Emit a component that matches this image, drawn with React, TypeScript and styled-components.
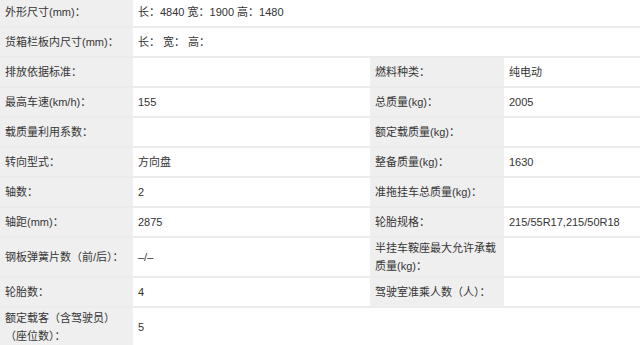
import React from "react";
import styled, { createGlobalStyle } from "styled-components";

const Global = createGlobalStyle`
  html, body { margin: 0; padding: 0; background: #ffffff; }
  body { font-family: "Liberation Sans", "Noto Sans CJK SC", sans-serif; overflow: hidden; }
`;

const Page = styled.div`
  width: 640px;
  height: 345px;
  overflow: hidden;
  background: #ffffff;
`;

const Table = styled.table`
  width: 640px;
  margin-top: -3px;
  border-collapse: collapse;
  table-layout: fixed;
  font-size: 11px;
  color: #333333;
`;

const Row = styled.tr`
  border-bottom: 2px solid #ebebeb;
`;

const Cell = styled.td<{ $label?: boolean }>`
  height: 30px;
  box-sizing: border-box;
  padding: 1px 4px 1px 5px;
  line-height: 18px;
  vertical-align: middle;
  background: ${(p) => (p.$label ? "#efefef" : "#ffffff")};
  color: ${(p) => (p.$label ? "#363636" : "#333333")};
  word-break: normal;
`;

type Item = { l1: string; v1: string; l2?: string; v2?: string; wide?: boolean };

const rows: Item[] = [
  { l1: "外形尺寸(mm)：", v1: "长：4840 宽：1900 高：1480", wide: true },
  { l1: "货箱栏板内尺寸(mm)：", v1: "长：  宽：  高：", wide: true },
  { l1: "排放依据标准：", v1: "", l2: "燃料种类：", v2: "纯电动" },
  { l1: "最高车速(km/h)：", v1: "155", l2: "总质量(kg)：", v2: "2005" },
  { l1: "载质量利用系数：", v1: "", l2: "额定载质量(kg)：", v2: "" },
  { l1: "转向型式：", v1: "方向盘", l2: "整备质量(kg)：", v2: "1630" },
  { l1: "轴数：", v1: "2", l2: "准拖挂车总质量(kg)：", v2: "" },
  { l1: "轴距(mm)：", v1: "2875", l2: "轮胎规格：", v2: "215/55R17,215/50R18" },
  { l1: "钢板弹簧片数（前/后）：", v1: "–/–", l2: "半挂车鞍座最大允许承载质量(kg)：", v2: "" },
  { l1: "轮胎数：", v1: "4", l2: "驾驶室准乘人数（人）：", v2: "" },
  { l1: "额定载客（含驾驶员）（座位数）：", v1: "5", wide: true },
];

export default function App() {
  return (
    <Page>
      <Global />
      <Table>
        <colgroup>
          <col style={{ width: 133 }} />
          <col style={{ width: 237 }} />
          <col style={{ width: 134 }} />
          <col style={{ width: 136 }} />
        </colgroup>
        <tbody>
          {rows.map((r, i) => (
            <Row key={i}>
              <Cell $label>{r.l1}</Cell>
              {r.wide ? (
                <Cell colSpan={3}>{r.v1}</Cell>
              ) : (
                <>
                  <Cell>{r.v1}</Cell>
                  <Cell $label>{r.l2}</Cell>
                  <Cell>{r.v2}</Cell>
                </>
              )}
            </Row>
          ))}
        </tbody>
      </Table>
    </Page>
  );
}
